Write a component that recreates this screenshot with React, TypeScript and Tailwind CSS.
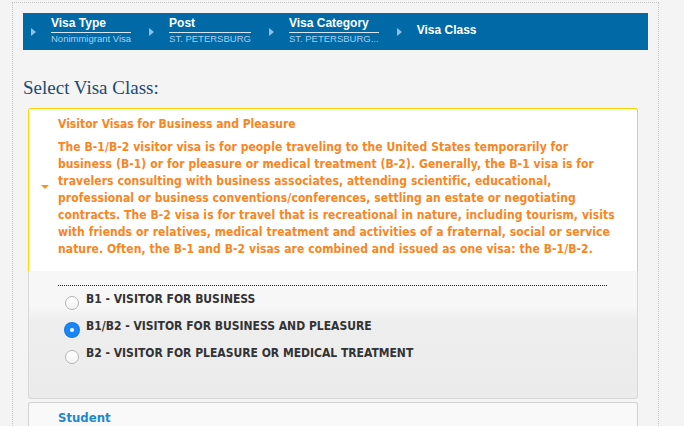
import React from "react";

const steps = [
  { title: "Visa Type", sub: "Nonimmigrant Visa" },
  { title: "Post", sub: "ST. PETERSBURG" },
  { title: "Visa Category", sub: "ST. PETERSBURG..." },
];

const options = [
  { label: "B1 - VISITOR FOR BUSINESS", checked: false },
  { label: "B1/B2 - VISITOR FOR BUSINESS AND PLEASURE", checked: true },
  { label: "B2 - VISITOR FOR PLEASURE OR MEDICAL TREATMENT", checked: false },
];

const Arrow = () => (
  <span className="mt-[4px] h-0 w-0 shrink-0 border-y-[4px] border-l-[5px] border-y-transparent border-l-[#8ec2ea]" />
);

const Radio = ({ checked }: { checked: boolean }) =>
  checked ? (
    <span className="mt-[10px] flex h-[14px] w-[14px] shrink-0 items-center justify-center rounded-full bg-[#1a85f7] shadow-[0_0_0_1px_#1477e6]">
      <span className="h-[4px] w-[4px] rounded-full bg-white" />
    </span>
  ) : (
    <span className="mt-[10px] h-[14px] w-[14px] shrink-0 rounded-full border border-[#b4b4b4] bg-[linear-gradient(#ffffff,#f4f4f4)]" />
  );

const App = () => {
  return (
    <div className="min-h-screen bg-[#f4f4f4] pl-3 pr-[25px] pt-[2px]">
      <div className="min-h-[430px] border border-b-0 border-dotted border-[#c6c6c6] px-[10px] pt-[10px]">
        {/* breadcrumb */}
        <div
          className="flex h-[37px] items-center bg-[#0069a6] pb-[3px] pl-2"
          style={{ fontFamily: '"Liberation Sans", Arial, sans-serif' }}
        >
          {steps.map((s, i) => (
            <div key={s.title} className={`flex items-center ${i > 0 ? "ml-[18px]" : ""}`}>
              <Arrow />
              <div className="ml-[15px]">
                <div className="border-b border-[#d6e6f2] pb-[2px] text-[12px] font-bold leading-[14px] text-white">
                  {s.title}
                </div>
                <div className="text-[9.5px] leading-[12px] text-[#a9d0ef]">{s.sub}</div>
              </div>
            </div>
          ))}
          <div className="ml-[18px] flex items-center">
            <Arrow />
            <div className="ml-[15px] text-[12px] font-bold leading-[14px] text-white">Visa Class</div>
          </div>
        </div>

        <h1
          className="mt-[26px] text-[19px] leading-[24px] text-[#1c4a70]"
          style={{ fontFamily: '"Liberation Serif", Georgia, serif' }}
        >
          Select Visa Class:
        </h1>

        <div
          className="ml-[5px] mr-[10px] mt-[8px]"
          style={{ fontFamily: '"DejaVu Sans Condensed", "DejaVu Sans", sans-serif' }}
        >
          {/* open panel */}
          <div className="flex rounded-t-[3px] border border-b-0 border-[#ffd500] bg-white pb-[13px] pt-[7px]">
            <div className="flex w-[29px] shrink-0 items-center justify-center">
              <span className="ml-[2px] h-0 w-0 border-x-[4px] border-t-[4px] border-x-transparent border-t-[#f7941d]" />
            </div>
            <div className="pr-[18px] text-[12px] font-bold leading-[17px] tracking-[0.08px] text-[#f7861f]">
              <div className="font-semibold tracking-normal">Visitor Visas for Business and Pleasure</div>
              <p className="mt-[6px]">
                The B-1/B-2 visitor visa is for people traveling to the United States temporarily for
                business (B-1) or for pleasure or medical treatment (B-2). Generally, the B-1 visa is for
                travelers consulting with business associates, attending scientific, educational,
                professional or business conventions/conferences, settling an estate or negotiating
                contracts. The B-2 visa is for travel that is recreational in nature, including tourism, visits
                with friends or relatives, medical treatment and activities of a fraternal, social or service
                nature. Often, the B-1 and B-2 visas are combined and issued as one visa: the B-1/B-2.
              </p>
            </div>
          </div>
          <div className="rounded-b-[3px] border border-t-0 border-[#d8d8d8] bg-[linear-gradient(#f7f7f7_0%,#f7f7f7_28%,#eeeeee_40%,#ebebeb_100%)] pb-[31px] pl-[29px] pr-[30px] pt-[14px]">
            <div className="border-t border-dotted border-[#222]" />
            {options.map((o) => (
              <div key={o.label} className="flex h-[27px] items-start pl-[7px]">
                <Radio checked={o.checked} />
                <span className="ml-[7px] text-[12px] font-bold leading-[27px] text-[#333]">{o.label}</span>
              </div>
            ))}
          </div>

          {/* collapsed panel */}
          <div className="mt-[3px] h-[40px] rounded-t-[3px] border border-b-0 border-[#d2d2d2] bg-[#f9f9f9] pl-[29px] pt-[6px]">
            <div className="text-[13px] font-bold leading-[17px] text-[#1e88d0]">Student</div>
          </div>
        </div>
      </div>
    </div>
  );
};

export default App;
